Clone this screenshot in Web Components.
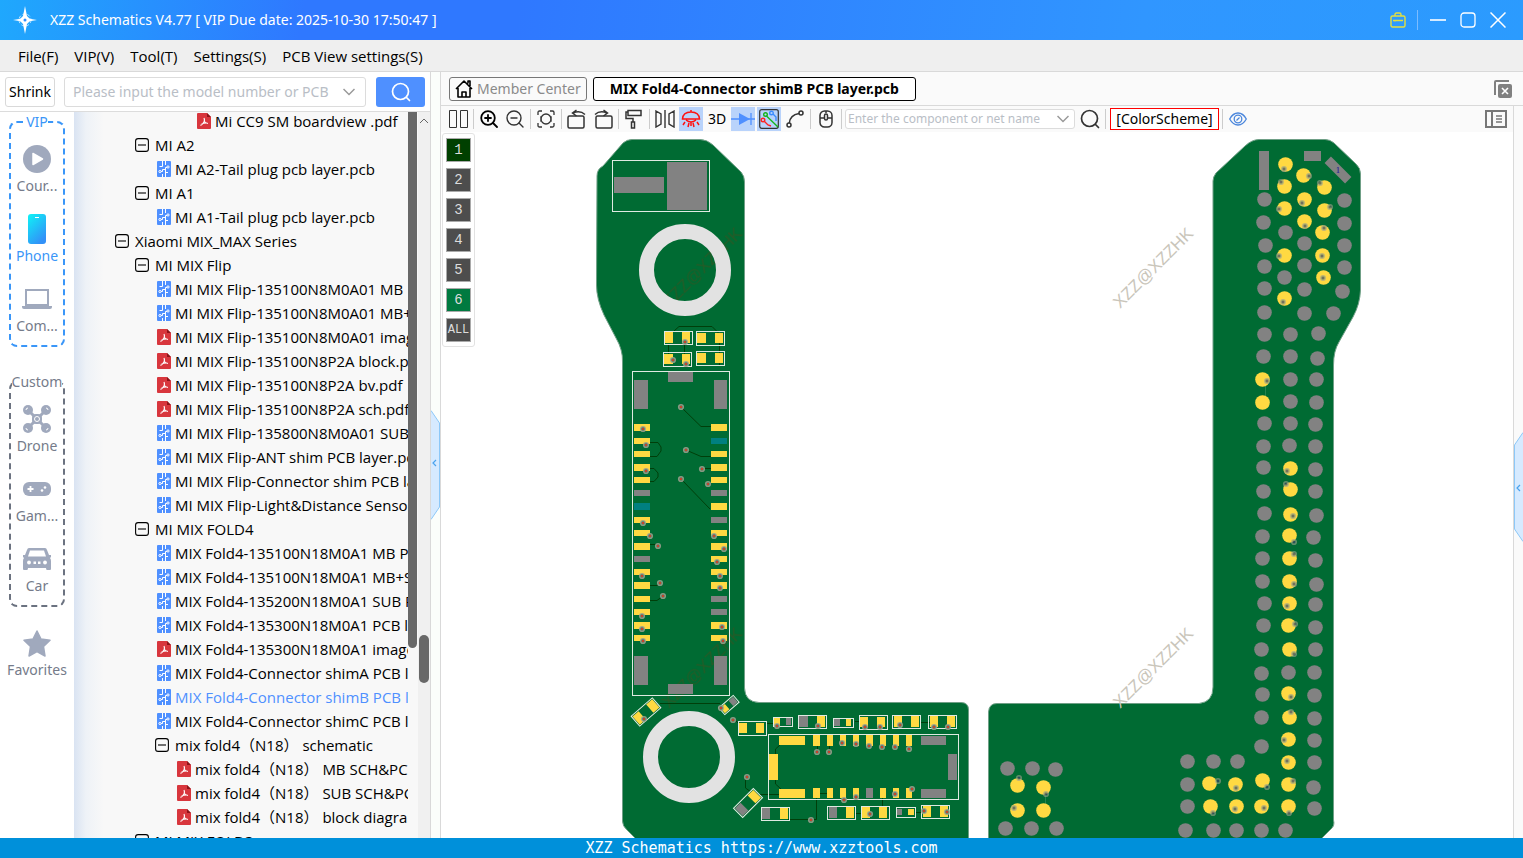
<!DOCTYPE html>
<html lang="en">
<head>
<meta charset="utf-8">
<title>XZZ Schematics</title>
<style>
  body { margin: 0; font: 14px/20px "Noto Sans", "Open Sans", sans-serif; color: #000; }
</style>
</head>
<body>
<xzz-app></xzz-app>
<script>
const RESET = `*{box-sizing:border-box}
button,input{font:inherit;color:inherit;margin:0;padding:0;border:0;background:none;border-radius:0}
button{cursor:pointer;display:flex;align-items:center;justify-content:center}
input{outline:0;min-width:0}svg{display:block}`;

class Base extends HTMLElement {
  paint(css, html) {
    const t = document.createElement('template');
    t.innerHTML = `<style>${RESET}${css}</style>${html}`;
    if (!this.shadowRoot) this.attachShadow({ mode: 'open' });
    this.shadowRoot.replaceChildren(t.content.cloneNode(true));
  }
}

/* name: [width, height, markup]; strokes use currentColor */
const S = 'fill="none" stroke="currentColor"';
const ICONS = {
  logo: [24, 28, `<path fill="#fff" d="M12 0L14 10 18 14 14 18 12 28 10 18 6 14 10 10z"/><path fill="#fff" d="M0 14L9 12.5 12 11 15 12.5 24 14 15 15.5 12 17 9 15.5z"/><circle cx="12" cy="14" r="6" fill="none" stroke="#fff" stroke-dasharray="3 2" opacity=".7"/><circle cx="12" cy="14" r="1.5" fill="#2f8fff"/>`],
  bag: [16, 16, `<g ${S} stroke-width="1.4"><rect x="1" y="4" width="14" height="11" rx="1.5"/><path d="M5 4V2.5Q5 1 6.500 1h3Q11 1 11 2.500V4M3 8.500h10M5 8.500v1"/></g>`],
  min: [16, 16, `<path ${S} stroke-width="1.6" d="M0 8h16"/>`],
  max: [16, 16, `<rect ${S} stroke-width="1.3" x="1" y="1" width="14" height="14" rx="3"/>`],
  close: [16, 16, `<path ${S} stroke-width="1.5" d="M.5.5l15 15m0-15l-15 15"/>`],
  search: [20, 20, `<g ${S} stroke-width="1.7" stroke-linecap="round"><circle cx="9.500" cy="9.500" r="8"/><path d="M15.500 15.500l3 3"/></g>`],
  chev: [12, 8, `<path ${S} stroke-width="1.500" d="M.5 1L6 6.500 11.500 1"/>`],
  chevup: [10, 6, `<path ${S} d="M1 5l4-4 4 4"/>`],
  home: [18, 20, `<g ${S} stroke-width="1.600" stroke-linejoin="round"><path d="M1 10L9 2l8 8M3 9v9h12V9M13 4.500V2h2v5M7 18v-5h4v5"/></g>`],
  closeall: [18, 18, `<path fill="#808080" d="M0 2Q0 0 2 0h13v2H2v13H0z"/><rect x="4" y="4" width="14" height="14" rx="2" fill="#808080"/><path stroke="#fff" stroke-width="1.600" d="M8 8l6 6m0-6l-6 6"/>`],
  panel: [22, 18, `<g fill="none" stroke="#777" stroke-width="2"><path d="M1 1h20v16H1zM7 1v16"/><path stroke-width="1.500" d="M11 6h6m-6 3h6m-6 3h6"/></g>`],
  split: [20, 18, `<path ${S} d="M1.500.5h7v17h-7zM12.500.5h7v17h-7z"/>`],
  zin: [18, 18, `<g ${S} stroke-width="1.800" stroke-linecap="round"><circle cx="8" cy="8" r="6.800"/><path d="M13 13l4 4M5 8h6M8 5v6"/></g>`],
  zout: [18, 18, `<g ${S} stroke-width="1.400" stroke-linecap="round"><circle cx="8" cy="8" r="7"/><path d="M13 13l4 4M5 8h6"/></g>`],
  fit: [18, 18, `<g ${S} stroke-width="1.300"><path d="M1 5V2.500Q1 1 2.500 1H5M13 1h2.500Q17 1 17 2.500V5M17 13v2.500Q17 17 15.500 17H13M5 17H2.500Q1 17 1 15.500V13"/><circle cx="9" cy="9" r="5"/><path d="M3 7q1-1 1 1v2q0 2-1 1M15 7q-1-1-1 1v2q0 2 1 1" stroke-width=".8"/></g>`],
  rotl: [20, 20, `<g ${S} stroke-width="1.500"><rect x="1" y="7" width="16" height="12" rx="1.500"/><path d="M6 4q7-3 12 1.500M9.500 1L5.500 4 9.500 7"/></g>`],
  rotr: [20, 20, `<g ${S} stroke-width="1.500"><rect x="3" y="7" width="16" height="12" rx="1.500"/><path d="M14 4Q7 1 2 5.500M10.500 1l4 3-4 3"/></g>`],
  roller: [18, 20, `<g ${S} stroke-width="1.500"><path d="M3 1.500h13v5H3zM3 3H1v6.500h7V13M6.500 13h3v6h-3z"/></g>`],
  mirror: [20, 18, `<path ${S} stroke-width="1.400" d="M1 1l5 3v10l-5 3zM19 1l-5 3v10l5 3zM10 0v18"/>`],
  led: [20, 20, `<g ${S} stroke-width="1.500"><path d="M1.500 10Q2 3 10 3t8.500 7zM10 3V1M5 11q5 4 10 0M4 13l-2 3M8 14l-1 4M12 14l1 4M16 13l2 3M10 13v4"/></g>`],
  diode: [24, 16, `<path stroke="currentColor" stroke-width="1.300" d="M0 8h24M20 2v12"/><path fill="currentColor" d="M8 2l11 6-11 6z"/>`],
  traces: [20, 20, `<rect x=".7" y=".7" width="18.600" height="18.600" rx="2" fill="none" stroke="#333" stroke-width="1.200"/><g fill="none" stroke-width="1.400"><g stroke="#17b51c"><circle cx="6.500" cy="5.500" r="1.800"/><path d="M7.500 7L19 18"/></g><g stroke="#3b8cff"><circle cx="12.500" cy="4" r="1.800"/><path d="M14 5l3 3v4"/></g><g stroke="#f22"><circle cx="4" cy="11" r="1.800"/><path d="M5.500 12.500L9 16l3 1"/></g></g>`],
  curve: [18, 18, `<g ${S} stroke-width="1.500"><circle cx="15" cy="3" r="2"/><circle cx="3" cy="15" r="2"/><path d="M13 3.500Q4 5 3.300 13"/></g>`],
  mouse: [14, 18, `<g ${S} stroke-width="1.500"><rect x="1" y="1" width="12" height="16" rx="4.500"/><path d="M1 8h4M9 8h4M7 1v2"/><rect x="5.500" y="4" width="3" height="6" rx="1.500"/></g>`],
  eye: [18, 14, `<g ${S} stroke-width="1.300"><path d="M.7 7Q4 1 9 1t8.300 6Q14 13 9 13T.7 7z"/><circle cx="9" cy="7" r="3.800"/><path d="M7.500 8.500l3-3"/></g>`],
  course: [28, 28, `<circle cx="14" cy="14" r="14" fill="#a0a9bd"/><path fill="#fff" stroke="#fff" stroke-width="1.500" stroke-linejoin="round" d="M10 8.500v11l9.500-5.500z"/>`],
  phone: [18, 30, `<defs><linearGradient id="g" x2=".6" y2="1"><stop stop-color="#0ef4f6"/><stop offset="1" stop-color="#3291f8"/></linearGradient></defs><rect width="18" height="30" rx="3" fill="url(#g)"/><path stroke="#fff" d="M7 3.500h4"/>`],
  laptop: [30, 20, `<path fill="none" stroke="#a0a9bd" stroke-width="2" d="M4 1h22v15H4z"/><path fill="#a0a9bd" d="M0 17h30v1q0 2-2 2H2q-2 0-2-2z"/>`],
  drone: [28, 28, `<g fill="#a0a9bd"><circle cx="5" cy="5" r="5"/><circle cx="23" cy="5" r="5"/><circle cx="5" cy="23" r="5"/><circle cx="23" cy="23" r="5"/><rect x="9" y="9" width="10" height="10" rx="4"/></g><path stroke="#a0a9bd" stroke-width="3" d="M5 5l18 18M23 5L5 23"/><g fill="none" stroke="#fff"><circle cx="14" cy="14" r="2.500"/><path d="M3 5q0-2 2-2M25 5q0-2-2-2M3 23q0 2 2 2M25 23q0 2-2 2"/></g>`],
  game: [28, 14, `<rect width="28" height="14" rx="6" fill="#a0a9bd"/><path stroke="#fff" stroke-width="1.800" d="M4.500 7h6M7.500 4v6"/><circle cx="19" cy="8.500" r="1.300" fill="#fff"/><circle cx="22" cy="5.500" r="1.300" fill="#fff"/>`],
  car: [28, 22, `<path fill="#a0a9bd" d="M6 0h16q1.500 0 2 2l2 5h2v2l-1 1q1 1 1 3v8q0 1-1 1h-3q-1 0-1-2H5q0 2-1 2H1q-1 0-1-1v-8q0-2 1-3L0 9V7h2l2-5q.5-2 2-2z"/><path fill="#fff" d="M7 2.500h14l2 6H5z"/><g fill="#fff"><circle cx="6" cy="14.500" r="1.900"/><circle cx="22" cy="14.500" r="1.900"/><rect x="10.500" y="13.500" width="2.500" height="2.500"/><rect x="15" y="13.500" width="2.500" height="2.500"/></g>`],
  star: [28, 27, `<path fill="#a0a9bd" stroke="#a0a9bd" stroke-width="1.500" stroke-linejoin="round" d="M14 1l4 8 9 1.300-6.500 6.200L22 26l-8-4.300L6 26l1.500-9.500L1 10.300 10 9z"/>`],
  pcb: [14, 16, `<rect width="14" height="16" rx="1" fill="#4f90ff"/><g fill="none" stroke="#fff" stroke-width="1"><path d="M5.500 0v5.500H2.500M8.500 0v4M8.500 16V6.500H10M5.500 16v-3M4 10.500H5.500V8.500H8.500M11 11.500H8.500"/><circle cx="11" cy="6" r="1.100"/><circle cx="3" cy="10.500" r="1.100"/></g>`],
  pdf: [14, 16, `<path fill="#d8363d" d="M1 0h9l4 4v11q0 1-1 1H1q-1 0-1-1V1q0-1 1-1z"/><path fill="#8c1419" d="M10 0l4 4h-4z"/><path fill="none" stroke="#fff" stroke-width="1.200" d="M7 5q1 2 0 4-1 2-3.500 3.500M7 8q1 2 4 2.500M4.500 11q2-1 5-1"/>`],
  toggle: [14, 14, `<rect x=".6" y=".6" width="12.800" height="12.800" rx="2.500" ${S} stroke-width="1.100"/><path stroke="currentColor" stroke-width="1.100" d="M3 7h8"/>`]
};
class XIcon extends Base {
  connectedCallback() {
    const [w, h, m] = ICONS[this.getAttribute('name')];
    this.paint(`:host{display:block;flex:none}`, `<svg width="${w}" height="${h}" viewBox="0 0 ${w} ${h}" aria-hidden="true">${m}</svg>`);
  }
}
customElements.define('xzz-icon', XIcon);

class TitleBar extends Base {
  connectedCallback() {
    this.paint(`:host{display:flex;align-items:center;height:40px;padding:0 17px 0 13px;color:#fff;
      background:linear-gradient(100deg,#1fa8fd 0,#2f78ff 20%,#2f78ff 34%,#3096ff 75%,#2b9bfe 100%)}
      h1{margin:0 auto 0 13px;font:inherit}
      .win{display:flex;align-items:center;gap:14px}.bag{color:#e3df3f;padding-right:11px;height:20px;border-right:1px solid #7cbcff;margin-right:-2px}`,
      `<xzz-icon name="logo"></xzz-icon><h1><slot></slot></h1><div class="win">
      <button class="bag" aria-label="Bag"><xzz-icon name="bag"></xzz-icon></button>
      <button aria-label="Minimise"><xzz-icon name="min"></xzz-icon></button>
      <button aria-label="Maximise"><xzz-icon name="max"></xzz-icon></button>
      <button aria-label="Close"><xzz-icon name="close"></xzz-icon></button></div>`);
  }
}
customElements.define('xzz-title-bar', TitleBar);

class MenuBar extends Base {
  connectedCallback() {
    const items = ['File(F)', 'VIP(V)', 'Tool(T)', 'Settings(S)', 'PCB View settings(S)'];
    this.paint(`:host{display:block;background:#efefef;border-bottom:1px solid #d9d9d9}
      nav{display:flex;gap:16px;height:31px;padding:0 18px;font:15px/20px "Open Sans",sans-serif}`,
      `<nav>${items.map(i => `<button>${i}</button>`).join('')}</nav>`);
  }
}
customElements.define('xzz-menu-bar', MenuBar);

class Combo extends Base {
  connectedCallback() {
    this.paint(`:host{display:flex;align-items:center;height:30px;padding:0 10px 0 8px;border:1px solid #dcdcdc;border-radius:3px;background:#fff;color:#9a9a9a}
      input{flex:1;width:0}input::placeholder{color:#b9bec6;opacity:1}`,
      `<input type="text" aria-label="${this.getAttribute('label')}" placeholder="${this.getAttribute('label')}"><button aria-label="Show list"><xzz-icon name="chev"></xzz-icon></button>`);
  }
}
customElements.define('xzz-combo', Combo);

class NavItem extends Base {
  connectedCallback() {
    const on = this.hasAttribute('active');
    this.paint(`:host{display:block;height:70px;color:${on ? '#3a96f8' : '#757b8a'}}
      button{width:100%;flex-direction:column;padding-top:8px;gap:1px}.i{display:grid;place-items:center;height:32px}span{height:22px;white-space:nowrap}`,
      `<button ${on ? 'aria-current="page"' : ''}><div class="i"><xzz-icon name="${this.getAttribute('icon')}"></xzz-icon></div><span><slot></slot></span></button>`);
  }
}
customElements.define('xzz-nav-item', NavItem);

class NavRail extends Base {
  connectedCallback() {
    this.paint(`:host{display:block;width:74px;flex:none;background:#fff;overflow:hidden}
      fieldset{margin:1px 9px 26px;padding:4px 0 0;border:2px dashed #3a96f8;border-radius:8px;min-width:0}
      legend{padding:0;margin:0 auto;line-height:18px;color:#3a96f8}
      .c{border-color:#6b7280;margin-bottom:12px}.c legend{color:#757b8a}`,
      `<fieldset><legend>VIP</legend><xzz-nav-item icon="course">Cour...</xzz-nav-item><xzz-nav-item icon="phone" active>Phone</xzz-nav-item><xzz-nav-item icon="laptop">Com...</xzz-nav-item></fieldset>
      <fieldset class="c"><legend>Custom</legend><xzz-nav-item icon="drone">Drone</xzz-nav-item><xzz-nav-item icon="game">Gam...</xzz-nav-item><xzz-nav-item icon="car">Car</xzz-nav-item></fieldset>
      <xzz-nav-item icon="star">Favorites</xzz-nav-item>`);
  }
}
customElements.define('xzz-nav-rail', NavRail);

class TreeRow extends Base {
  connectedCallback() {
    const k = this.getAttribute('kind'), d = +this.getAttribute('depth');
    this.paint(`:host{display:block;height:24px;padding-left:${41 + d * 20}px;overflow:hidden;${this.hasAttribute('current') ? 'color:#4f90ff' : ''}}
      button{width:100%;height:24px;justify-content:flex-start}xzz-icon{width:18px;margin-left:${k === 'toggle' ? 0 : 2}px;margin-right:${k === 'toggle' ? 2 : 0}px}
      span{flex:1;min-width:0;overflow:hidden;white-space:pre;text-align:left}`,
      `<button><xzz-icon name="${k}"></xzz-icon><span><slot></slot></span></button>`);
  }
}
customElements.define('xzz-tree-row', TreeRow);

const TREE = [
  ['pdf', 4, 'Mi CC9 SM boardview .pdf'],
  ['toggle', 1, 'MI A2'], ['pcb', 2, 'MI A2-Tail plug pcb layer.pcb'],
  ['toggle', 1, 'MI A1'], ['pcb', 2, 'MI A1-Tail plug pcb layer.pcb'],
  ['toggle', 0, 'Xiaomi MIX_MAX Series'], ['toggle', 1, 'MI MIX Flip'],
  ['pcb', 2, 'MI MIX Flip-135100N8M0A01 MB P'],
  ['pcb', 2, 'MI MIX Flip-135100N8M0A01 MB+S'],
  ['pdf', 2, 'MI MIX Flip-135100N8M0A01 image'],
  ['pdf', 2, 'MI MIX Flip-135100N8P2A block.pdf'],
  ['pdf', 2, 'MI MIX Flip-135100N8P2A bv.pdf'],
  ['pdf', 2, 'MI MIX Flip-135100N8P2A sch.pdf'],
  ['pcb', 2, 'MI MIX Flip-135800N8M0A01 SUB'],
  ['pcb', 2, 'MI MIX Flip-ANT shim PCB layer.pcb'],
  ['pcb', 2, 'MI MIX Flip-Connector shim PCB lay'],
  ['pcb', 2, 'MI MIX Flip-Light&amp;Distance Sensor'],
  ['toggle', 1, 'MI MIX FOLD4'],
  ['pcb', 2, 'MIX Fold4-135100N18M0A1 MB PCB'],
  ['pcb', 2, 'MIX Fold4-135100N18M0A1 MB+SU'],
  ['pcb', 2, 'MIX Fold4-135200N18M0A1 SUB PC'],
  ['pcb', 2, 'MIX Fold4-135300N18M0A1 PCB lay'],
  ['pdf', 2, 'MIX Fold4-135300N18M0A1 image.'],
  ['pcb', 2, 'MIX Fold4-Connector shimA PCB lay'],
  ['pcb', 2, 'MIX Fold4-Connector shimB PCB lay', 1],
  ['pcb', 2, 'MIX Fold4-Connector shimC PCB lay'],
  ['toggle', 2, 'mix fold4（N18） schematic'],
  ['pdf', 3, 'mix fold4（N18） MB SCH&amp;PCB'],
  ['pdf', 3, 'mix fold4（N18） SUB SCH&amp;PCB'],
  ['pdf', 3, 'mix fold4（N18） block diagram'],
  ['toggle', 1, 'MI MIX FOLD3']
];
class FileTree extends Base {
  connectedCallback() {
    this.paint(`:host{display:flex;flex:1;min-width:0;overflow:hidden;background:linear-gradient(90deg,#d9e3f2 0,#eef2f7 12px,#f8f8f8 30px)}
      .list{flex:1;min-width:0;overflow:hidden;font:15px/20px "Open Sans","Noto Sans CJK SC",sans-serif}
      .rows{margin-top:-3px}
      .in{width:9px;margin-right:1px;height:calc(100% - 190px);background:#686868;border-radius:0 0 5px 5px}
      .out{width:12px;background:#f0f0f0;display:flex;flex-direction:column;align-items:center;color:#666;padding:6px 0 155px;justify-content:space-between}
      .out i{width:10px;height:48px;border-radius:5px;background:#686868}`,
      `<div class="list"><div class="rows">${TREE.map(([k, d, t, c]) => `<xzz-tree-row kind="${k}" depth="${d}" ${c ? 'current' : ''}>${t}</xzz-tree-row>`).join('')}</div></div>
      <div class="in"></div><div class="out"><xzz-icon name="chevup"></xzz-icon><i></i></div>`);
  }
}
customElements.define('xzz-file-tree', FileTree);

class SidePanel extends Base {
  connectedCallback() {
    this.paint(`:host{display:flex;flex-direction:column;width:431px;border-right:1px solid #d9d9d9;min-height:0}
      form{display:flex;align-items:center;height:40px;padding:0 5px;border-bottom:1px solid #dcdcdc;background:#fff;margin:0}
      .s{width:50px;height:30px;border:1px solid #d9d9d9;border-radius:3px}
      xzz-combo{flex:1;margin:0 10px 0 9px}
      .go{width:49px;height:30px;border-radius:3px;background:#4f90ff;color:#fff}
      .b{display:flex;flex:1;min-height:0}`,
      `<form onsubmit="return false"><button type="button" class="s">Shrink</button><xzz-combo label="Please input the model number or PCB"></xzz-combo><button class="go" aria-label="Search"><xzz-icon name="search"></xzz-icon></button></form>
      <div class="b"><xzz-nav-rail></xzz-nav-rail><xzz-file-tree></xzz-file-tree></div>`);
  }
}
customElements.define('xzz-side-panel', SidePanel);

class Handle extends Base {
  connectedCallback() {
    const r = this.hasAttribute('right');
    this.paint(`:host{display:flex;align-items:center;width:10px;overflow:hidden;background:${r ? '#fafafa' : '#fbfefb'};border-${r ? 'left' : 'right'}:1px solid #d9d9d9;padding-top:${r ? 30 : 20}px}`,
      `<button aria-label="Toggle panel"><svg width="9" height="110" viewBox="0 0 9 110"><path fill="#d6eaff" stroke="#8cc8f8" d="${r ? 'M9 .5L.5 13v84L9 109.500' : 'M0 .5L8.500 13v84L0 109.500'}"/><path fill="none" stroke="#4aa3ee" stroke-width="1.200" d="M${r ? '6 53' : '5 50'}l-3 3l3 3"/></svg></button>`);
  }
}
customElements.define('xzz-handle', Handle);

class TabStrip extends Base {
  connectedCallback() {
    this.paint(`:host{display:flex;align-items:center;gap:6px;height:34px;padding:0 11px 0 8px;background:#fafafa;border-bottom:1px solid #d9d9d9}
      .t{height:24px;border:1px solid #777;border-radius:3px;padding:0 5px;gap:4px;color:#8a8a8a}
      .t xzz-icon{color:#000}.on{border-color:#000;background:#fff;color:#000;font-weight:700;padding:0 16px}.x{margin-left:auto}`,
      `<button class="t"><xzz-icon name="home"></xzz-icon>Member Center</button><button class="t on">MIX Fold4-Connector shimB PCB layer.pcb</button><button class="x" aria-label="Close all"><xzz-icon name="closeall"></xzz-icon></button>`);
  }
}
customElements.define('xzz-tab-strip', TabStrip);

class ToolBar extends Base {
  connectedCallback() {
    const b = (n, c = '') => `<button class="${c}" aria-label="${n}"><xzz-icon name="${n}"></xzz-icon></button>`, s = '<hr>';
    this.paint(`:host{display:flex;align-items:center;height:26px;padding:0 4px;background:#fafafa}
      button{width:26px;height:24px;color:#333;flex:none}hr{width:1px;height:20px;margin:0 2px;border:0;background:#ccc;flex:none}
      .on{width:24px;margin:0 1px;background:#b9d3fb}.red{color:#f11}.blue{color:#4f90ff}.eye{color:#4a86dc}.k{color:#000}
      .cs{width:109px;height:22px;border:1px solid #f00;margin:0 1px 0 2px;color:#000;background:#fff}
      .p{margin-left:auto}xzz-combo{width:230px;height:20px;margin:0 2px 0 1px;padding:0 5px 0 2px;font-size:12px;line-height:16px}`,
      b('split') + s + b('zin', 'k') + b('zout') + s + b('fit') + s + b('rotl') + b('rotr') + s + b('roller') + s + b('mirror') + b('led', 'on red') +
      '<button class="k">3D</button>' + b('diode', 'on blue') + b('traces', 'on') + b('curve') + s + b('mouse') + s +
      '<xzz-combo label="Enter the component or net name"></xzz-combo>' + b('search') + s + '<button class="cs">[ColorScheme]</button>' + s + b('eye', 'eye') + b('panel', 'p'));
  }
}
customElements.define('xzz-tool-bar', ToolBar);

class LayerList extends Base {
  connectedCallback() {
    const bg = { 1: '#004000', 6: '#007a40' };
    this.paint(`:host{display:flex;flex-direction:column;gap:6px;width:33px;padding:4px 3px;background:#fff;border:1px solid #e2e2e2;border-radius:3px}
      button{height:24px;border:1px solid #aaa;background:#4d4d4d;color:#dcdcdc;font:14px/20px "Liberation Mono",monospace}
      .all{font-size:12px}`,
      ['1', '2', '3', '4', '5', '6', 'ALL'].map(n => `<button class="${n === 'ALL' ? 'all' : ''}" style="${bg[n] ? 'background:' + bg[n] : ''}">${n}</button>`).join(''));
  }
}
customElements.define('xzz-layer-list', LayerList);

/* board geometry, in drawing units */
const pts = s => s.trim().split(/\s+/).map(p => p.split(',').map(Number));
const rects = (s, f) => pts(s).map(([x, y, w, h]) => `<rect x="${x}" y="${y}" width="${w}" height="${h}" fill="${f}"/>`).join('');
const Y = '#ffd942', G = '#828282', T = '#008080';
const GREY_BALLS = `1264,199 1344,200 1263,222 1344,223 1285,232 1265,245 1304,243 1344,245 1264,266 1304,265 1344,267 1284,277 1264,288 1304,289 1342,291 1264,312 1304,313 1333,313 1264,334 1290,334 1318,333 1263,356 1290,356 1317,358 1290,379 1316,379 1290,401 1316,402 1264,423 1290,423 1315,424 1263,446 1289,445 1315,446
1263,467 1263,491 1264,513 1262,536 1262,558 1262,581 1264,603 1263,625 1261,649 1261,673 1262,694 1261,717 1261,746 1288,672 1315,469 1315,491 1316,515 1313,537 1315,560 1316,584 1315,604 1315,627 1315,649 1314,672 1314,695 1314,718 1314,740 1314,762 1313,787 1314,808
1187,761 1213,761 1237,761 1187,784 1187,806 1185,830 1213,830 1236,830 1261,830 1285,830 1007,768 1032,768 1055,769 1005,828 1031,828 1056,828`;
const GOLD_BALLS = `1285,164 1303,175 1284,186 1324,187 1304,199 1284,208 1324,210 1304,221 1322,232 1284,255 1322,255 1323,277 1284,298 1262,379 1262,402 1290,468 1290,489 1290,514 1289,535 1289,558 1289,581 1289,603 1288,625 1289,649 1288,693 1289,717 1288,739
1288,762 1288,784 1288,806 1262,780 1261,806 1235,784 1236,806 1209,783 1210,806 1017,785 1043,787 1017,810 1043,810`;
const BLUE_VIAS = `1284,169 1309,176 1281,182 1320,183 1302,203 1330,207 1279,209 1305,226 1324,228 1279,256 1322,256 1323,278 1283,302 1267,381 1287,471 1286,484 1293,516 1294,542 1294,554 1294,584 1287,606 1295,624 1294,654 1291,697 1291,712 1284,740 1287,761 1293,781 1289,813 1267,787 1264,808 1236,788 1235,809 1218,781 1213,813 1019,778 1046,794 1014,808`;
const RED_VIAS = `685,342 673,360 686,364 681,407 643,429 646,445 686,450 646,471 702,469 681,479 708,484 643,523 650,536 658,546 714,536 724,549 717,562 642,576 720,576 660,583 720,588 663,596 642,616 642,629 643,641 722,627 723,641 644,719 721,708 733,720 777,726 818,726 865,727 880,727 900,725 934,727 948,727 817,752 829,752 842,743 856,744 869,746 882,747 895,747 909,749 747,777 844,800 856,797 895,794 912,789 811,820 870,814 924,811 947,812`;
const OUTLINES = `612,160,98,52 664,331,29,14 696,331,29,15 663,352,29,15 696,351,29,15 632,371,98,325 738,721,29,15 773,717,20,10 798,715,29,14 833,718,21,10 859,715,29,15 892,715,29,14 928,715,29,14 768,734,191,66 761,807,29,14 827,806,29,14 861,806,29,14 896,807,20,11 921,805,29,14`;
const GOLD = `665,332,8,11 682,332,8,11 697,333,9,10 715,333,8,10 664,354,9,10 682,354,8,10 697,353,9,10 715,353,8,10 739,723,8,10 756,723,8,10 774,718,6,8 817,716,8,11 846,719,5,7 860,717,8,10 877,717,8,10 894,716,8,11 911,716,8,11 930,716,8,11 947,716,8,11 779,736,26,9 779,789,26,9 769,754,9,26 780,808,8,11 846,807,8,11 862,807,8,11 879,807,8,11 908,809,6,6 923,806,8,11 940,806,8,11`;
const GREY = `614,177,50,16 667,162,40,48 668,372,25,10 668,684,25,10 634,380,14,29 714,380,13,29 634,656,14,29 714,656,13,29 786,718,5,7 799,716,9,11 834,719,6,7 921,736,25,9 921,789,25,9 948,754,9,26 762,808,8,11 829,807,8,11 897,809,5,6 1259,151,10,39 1304,151,17,10`;
const ROW_Y = [424, 438, 451, 464, 477, 490, 503, 517, 530, 543, 556, 569, 582, 596, 609, 622, 635];
const PAD_COLOR = { y: Y, g: G, t: T };
const column = (x, kinds) => ROW_Y.map((y, i) => `<rect x="${x}" y="${y}" width="16" height="${i % 3 ? 6 : 7}" fill="${PAD_COLOR[kinds[i]]}"/>`).join('');
const header = (y, h, kinds) => [813, 827, 840, 853, 866, 880, 893, 906].map((x, i) => `<rect x="${x}" y="${y}" width="${i % 4 ? 6 : 7}" height="${h}" fill="${PAD_COLOR[kinds[i]]}"/>`).join('');
const tilted = (x, y, a, l, w, p, c1, c2) => `<g transform="translate(${x} ${y}) rotate(${a})"><rect x="${-l / 2}" y="${-w / 2}" width="${l}" height="${w}" fill="none" stroke="#e8efe8"/><rect x="${-l / 2 + 1}" y="${-w / 2 + 1}" width="${p}" height="${w - 2}" fill="${c1}"/><rect x="${l / 2 - 1 - p}" y="${-w / 2 + 1}" width="${p}" height="${w - 2}" fill="${c2}"/></g>`;
const balls = (s, f) => pts(s).map(([x, y]) => `<circle cx="${x + .5}" cy="${y + .5}" r="7.300" fill="${f}"/>`).join('');
const vias = (s, f, o) => pts(s).map(([x, y]) => `<g opacity="${o}"><circle cx="${x}" cy="${y}" r="2.400" fill="#4f7d5a" stroke="#a5a294" stroke-opacity=".8" stroke-width="1.400"/><rect x="${x - 1}" y="${y - 1}" width="2" height="2" fill="${f}"/></g>`).join('');

class BoardView extends Base {
  connectedCallback() {
    const mark = list => list.map(([x, y]) => `<text transform="translate(${x} ${y}) rotate(-45)">XZZ@XZZHK</text>`).join('');
    this.paint(`:host{display:block;position:relative;flex:1;min-height:0;min-width:0;background:#fff;overflow:hidden}
      .board{position:absolute;inset:0;width:100%;height:100%}
      .wm{font:17px "Liberation Sans",sans-serif}
      xzz-layer-list{position:absolute;left:1px;top:1px}`,
      `<svg class="board" viewBox="441 132 1072 706" role="img" aria-label="Board layout">
      <g fill="#006b33" stroke="#6f9f86" stroke-width="1">
      <path d="M597 176Q597 169 603 166L623 143Q627 139.500 632 139.500H700Q707 139.500 713 145L741 172Q744.500 176 744.500 182V688Q745 702 759 702.500H961Q968.500 702.500 968.500 710V840H637L627 830Q622.500 826 622.500 821V362Q623 350 616 338L604 315Q596.500 299 596.500 285Z"/>
      <path d="M988.500 840V712Q989 703.500 997 703.500H1199Q1213 702 1213 687V181Q1213 177 1216 173L1245 146Q1252 139.500 1259 139.500H1325Q1330 139.500 1334 143L1356 164Q1360.500 168 1360.500 174V290Q1360 304 1353 317L1339 342Q1333.500 351 1333.500 365V820Q1335 826 1331 829L1320 840Z"/></g>
      <g class="wm" fill="#7a3a10" opacity=".3">${mark([[669, 309], [669, 709]])}</g>
      <g class="wm" fill="#c9c5ba">${mark([[1120, 309], [1120, 709]])}</g>
      <g fill="none" stroke="#e2e2e2" stroke-width="15"><circle cx="685" cy="270" r="38.500"/><circle cx="689" cy="757" r="38.500"/></g>
      <path fill="none" stroke="#003f0a" d="M668.500 355V345M674 331L679 326.500H712L719.500 334V365M684.500 345V354M681 407L701 426.500H711M686 450L701 456.500H711M702 468.500H711M681 479L710 509M650 442.500H658L661 447V451L657 456.500H650M650 468.500H654L658 473V477L654 481.500H650M650 544.500H658M650 585.500H657L660 583M650 600.500H657L663 596M660 703.500H720M766 723.500H774M735 720L738 723M855 721.500H860M921 722.500H930M817.500 745V752M829.500 745V752M775.500 754V749L780 745M775.500 780V784L781 789M760 794.500H779M745.500 777V788L751 792M816.500 798V819.500H788M820 793.500H828M882.500 798V807M855 813.500H862M915 812.500H923"/>
      ${rects(GREY, G)}${rects(GOLD, Y)}
      ${column(634, 'yyyyygtyyygyyyyyy')}${column(711, 'ytyyygygyyyyyggyy')}${header(735, 11, 'yyyyyyyy')}${header(788, 10, 'yyyygyyy')}
      <g fill="none" stroke="#dfeae2">${pts(OUTLINES).map(([x, y, w, h]) => `<rect x="${x + .5}" y="${y + .5}" width="${w - 1}" height="${h - 1}"/>`).join('')}</g>
      ${tilted(646, 712, -41, 28, 13, 8, Y, Y)}${tilted(729, 705, -41, 19, 9, 6, Y, G)}${tilted(748, 803, -45, 28, 13, 8, G, Y)}
      ${vias(RED_VIAS, '#c8402c', 1)}
      <path stroke="#26824f" d="M1265.500 385V397M1045.500 794V804"/>
      ${balls(GREY_BALLS, G)}${balls(GOLD_BALLS, Y)}${vias(BLUE_VIAS, '#38406c', '.7')}
      <rect x="-14.500" y="-4.500" width="29" height="9" fill="${G}" transform="translate(1338 170) rotate(45)"/>
      <text x="1336" y="173" font-family="Liberation Serif" font-size="8" fill="#00009c">1</text>
      </svg><xzz-layer-list></xzz-layer-list>`);
  }
}
customElements.define('xzz-board-view', BoardView);

class Workspace extends Base {
  connectedCallback() {
    this.paint(`:host{display:flex;flex-direction:column;flex:1;min-width:0;min-height:0}
      .r{display:flex;flex:1;min-height:0}.c{display:flex;flex-direction:column;flex:1;min-width:0}`,
      `<xzz-tab-strip></xzz-tab-strip><div class="r"><div class="c"><xzz-tool-bar></xzz-tool-bar><xzz-board-view></xzz-board-view></div><xzz-handle right></xzz-handle></div>`);
  }
}
customElements.define('xzz-workspace', Workspace);

class App extends Base {
  connectedCallback() {
    this.paint(`:host{display:flex;flex-direction:column;height:100vh;overflow:hidden}
      main{display:flex;flex:1;min-height:0}
      footer{height:20px;background:#0090da;color:#fff;text-align:center;font:15px/21px "DejaVu Sans Mono",monospace;flex:none}
      a{color:inherit;text-decoration:none}`,
      `<xzz-title-bar>XZZ Schematics V4.77 [ VIP Due date: 2025-10-30 17:50:47 ]</xzz-title-bar><xzz-menu-bar></xzz-menu-bar>
      <main><xzz-side-panel></xzz-side-panel><xzz-handle></xzz-handle><xzz-workspace></xzz-workspace></main>
      <footer>XZZ Schematics <a href="https://www.xzztools.com">https://www.xzztools.com</a></footer>`);
  }
}
customElements.define('xzz-app', App);
</script>
</body>
</html>
